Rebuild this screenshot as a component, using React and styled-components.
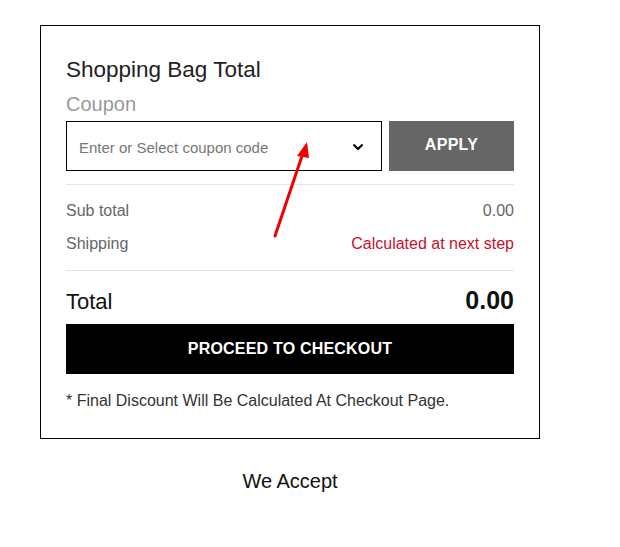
import React from "react";
import styled, { createGlobalStyle } from "styled-components";

const GlobalStyle = createGlobalStyle`
  body {
    margin: 0;
    background: #fff;
    font-family: "Liberation Sans", Arial, sans-serif;
  }
`;

const Page = styled.div`
  position: relative;
  width: 620px;
  height: 547px;
  padding: 25px 0 0 40px;
  box-sizing: border-box;
`;

const Column = styled.div`
  width: 500px;
`;

const Card = styled.div`
  border: 1px solid #000;
  padding: 31px 25px 28px 25px;
  box-sizing: border-box;
  height: 414px;
`;

const Title = styled.h2`
  margin: 0;
  font-size: 22.5px;
  font-weight: 400;
  color: #222;
  line-height: 26px;
`;

const Label = styled.div`
  margin-top: 10px;
  font-size: 20px;
  color: #999;
  line-height: 23px;
`;

const CouponRow = styled.div`
  display: flex;
  gap: 7px;
  margin-top: 5px;
`;

const SelectBox = styled.div`
  flex: 1;
  height: 50px;
  border: 1px solid #000;
  box-sizing: border-box;
  display: flex;
  align-items: center;
  justify-content: space-between;
  padding: 2px 17px 0 12px;
  font-size: 15px;
  color: #777;
`;

const ApplyButton = styled.button`
  width: 125px;
  height: 50px;
  border: none;
  background: #666;
  color: #fff;
  font-family: "Liberation Sans", Arial, sans-serif;
  font-weight: 700;
  font-size: 16px;
  letter-spacing: 0.3px;
  padding-bottom: 3px;
`;

const Divider = styled.hr`
  border: none;
  border-top: 1px solid #e6e6e6;
  margin: ${(p) => p.$m || "13px 0 0"};
`;

const Row = styled.div`
  display: flex;
  justify-content: space-between;
  font-size: 16px;
  line-height: 19px;
  color: #666;
  margin-top: ${(p) => p.$top || "14px"};
`;

const Red = styled.span`
  color: #c8102e;
`;

const TotalRow = styled.div`
  display: flex;
  justify-content: space-between;
  align-items: baseline;
  margin-top: 15px;
  color: #111;
`;

const TotalLabel = styled.span`
  font-size: 22px;
`;

const TotalValue = styled.span`
  font-size: 25px;
  font-weight: 700;
`;

const CheckoutButton = styled.button`
  display: block;
  width: 100%;
  height: 50px;
  margin-top: 9px;
  border: none;
  background: #000;
  color: #fff;
  font-family: "Liberation Sans", Arial, sans-serif;
  font-weight: 700;
  font-size: 16px;
  letter-spacing: 0.2px;
  padding-bottom: 2px;
`;

const Note = styled.p`
  margin: 18px 0 0;
  font-size: 16px;
  color: #333;
`;

const Accept = styled.div`
  text-align: center;
  margin-top: 31px;
  font-size: 20px;
  color: #111;
`;

const Arrow = styled.svg`
  position: absolute;
  left: 0;
  top: 0;
  pointer-events: none;
`;

export default function App() {
  return (
    <Page>
      <GlobalStyle />
      <Column>
        <Card>
          <Title>Shopping Bag Total</Title>
          <Label>Coupon</Label>
          <CouponRow>
            <SelectBox>
              <span>Enter or Select coupon code</span>
              <svg width="12" height="8" viewBox="0 0 12 8">
                <path d="M1.5 1.5 L6 6 L10.5 1.5" fill="none" stroke="#000" strokeWidth="2.2" />
              </svg>
            </SelectBox>
            <ApplyButton>APPLY</ApplyButton>
          </CouponRow>
          <Divider $m="13px 0 0" />
          <Row $top="16px">
            <span>Sub total</span>
            <span>0.00</span>
          </Row>
          <Row>
            <span>Shipping</span>
            <Red>Calculated at next step</Red>
          </Row>
          <Divider $m="17px 0 0" />
          <TotalRow>
            <TotalLabel>Total</TotalLabel>
            <TotalValue>0.00</TotalValue>
          </TotalRow>
          <CheckoutButton>PROCEED TO CHECKOUT</CheckoutButton>
          <Note>* Final Discount Will Be Calculated At Checkout Page.</Note>
        </Card>
        <Accept>We Accept</Accept>
      </Column>
      <Arrow width="620" height="547">
        <line x1="275" y1="236" x2="302" y2="156" stroke="#e00" strokeWidth="3" strokeLinecap="round" />
        <polygon points="307,142 297,156 309,158" fill="#e00" />
      </Arrow>
    </Page>
  );
}
